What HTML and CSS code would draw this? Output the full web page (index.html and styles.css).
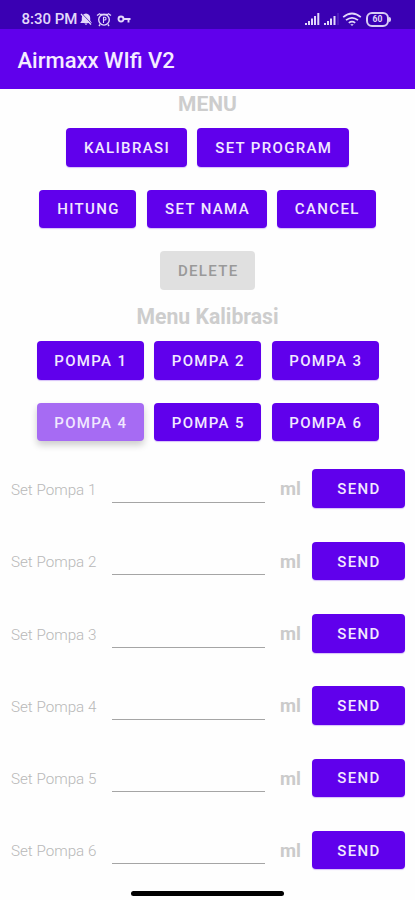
FILE: index.html
```html
<!DOCTYPE html>
<html lang="id">
<head>
<meta charset="utf-8">
<title>Airmaxx WIfi V2</title>
<link rel="stylesheet" href="styles.css">
</head>
<body>
<header>
  <div class="status">
    <span class="time">8:30 PM</span>
    <svg class="mute" width="14" height="14" viewBox="0 0 14 14"><path d="M7 1.500c-2.700.3-4.200 2.200-4.200 4.400v2.600L1.200 11h11.600l-1.600-2.500V5.900C11.200 3.700 9.700 1.800 7 1.500zM5.300 11.500h3.400L7 13z" fill="currentColor"/><path d="M2 2l10 10.500" stroke="currentColor" stroke-width="1.300"/><path d="M4 2.700l8 8.400" stroke="#3a00b3" stroke-width=".7"/></svg>
    <svg class="alarm" width="16" height="15" viewBox="0 0 16 15" fill="none" stroke="currentColor" stroke-width="1.400"><path d="M1 3.500l3-2M15 3.500l-3-2M4 2.500h8M4 12.500L3 14M12 12.500l1 1.500"/><circle cx="8" cy="7.800" r="5.300"/><path d="M7.500 11V5.300h1.200a1.300 1.300 0 0 1 0 2.700H7.500" stroke-width="1.100"/></svg>
    <svg class="key" width="14" height="10" viewBox="0 0 14 10" fill="none" stroke="currentColor" stroke-width="1.900"><circle cx="4" cy="5" r="2.500"/><path d="M6.500 5h7M11.500 5v3.500"/></svg>
    <svg class="signal-a" width="17" height="14" viewBox="0 0 17 14" fill="currentColor"><path d="M1 11h2v2H1zM4 9h2v4H4zM7 6.500h2V13H7zM10 4h2v9h-2zM13.300 1h2v12h-2z"/></svg>
    <svg class="signal-b" width="17" height="14" viewBox="0 0 17 14" fill="currentColor"><path d="M1 11h2v2H1zM4 9h2v4H4zM7 6.500h2V13H7zM10.500 4h2v9h-2z"/><path d="M14.500 1h1v12h-1z" opacity=".25"/></svg>
    <svg class="wifi" width="20" height="15" viewBox="0 0 20 15" fill="none" stroke="currentColor" stroke-width="1.700"><path d="M1.200 5.200Q10-2.200 18.800 5.200M4 8.200q6-4.800 12 0M6.800 10.900q3.200-2.400 6.400 0"/><path d="M8.300 12.300h3.400L10 14z" fill="currentColor" stroke="none"/></svg>
    <span class="battery"><span class="level">60</span></span>
  </div>
  <h1>Airmaxx WIfi V2</h1>
</header>
<main>
  <h2>MENU</h2>
  <div class="buttons"><button class="kalibrasi">KALIBRASI</button><button class="program">SET PROGRAM</button></div>
  <div class="buttons"><button class="hitung">HITUNG</button><button class="nama">SET NAMA</button><button class="cancel">CANCEL</button></div>
  <div class="buttons"><button class="delete" disabled>DELETE</button></div>
  <h2 class="sub">Menu Kalibrasi</h2>
  <div class="buttons pumps"><button>POMPA 1</button><button>POMPA 2</button><button>POMPA 3</button></div>
  <div class="buttons pumps"><button class="pressed">POMPA 4</button><button>POMPA 5</button><button>POMPA 6</button></div>
  <div class="settings">
    <div class="row"><label for="p1">Set Pompa 1</label><input id="p1"><b>ml</b><button>SEND</button></div>
    <div class="row"><label for="p2">Set Pompa 2</label><input id="p2"><b>ml</b><button>SEND</button></div>
    <div class="row"><label for="p3">Set Pompa 3</label><input id="p3"><b>ml</b><button>SEND</button></div>
    <div class="row"><label for="p4">Set Pompa 4</label><input id="p4"><b>ml</b><button>SEND</button></div>
    <div class="row"><label for="p5">Set Pompa 5</label><input id="p5"><b>ml</b><button>SEND</button></div>
    <div class="row"><label for="p6">Set Pompa 6</label><input id="p6"><b>ml</b><button>SEND</button></div>
  </div>
</main>
<div class="home"></div>
</body>
</html>
```
FILE: styles.css
```css
* { box-sizing: border-box; }
body {
  margin: 0;
  height: 900px;
  overflow: hidden;
  background: #fefefe;
  font-family: Roboto, "Liberation Sans", sans-serif;
}
header { height: 89px; background: #6000ec; color: #f4ecff; }
.status {
  height: 29px;
  padding: 9px 26px 0 21.5px;
  background: #3a00b3;
  color: #e2d8fa;
  display: flex;
  align-items: center;
}
.time { width: 57.5px; font-size: 15px; font-weight: 500; line-height: 20px; white-space: nowrap; }
.status svg { flex: none; }
.alarm { margin-left: 3px; }
.key { margin-left: 5px; }
.signal-a { margin-left: auto; }
.signal-b { margin-left: 2.5px; }
.wifi { margin-left: 2px; }
.battery {
  position: relative;
  width: 23px;
  height: 15px;
  margin-left: 4px;
  border: 2px solid #d8cdf5;
  border-radius: 6px;
  display: flex;
  align-items: center;
  justify-content: center;
}
.battery::after {
  content: "";
  position: absolute;
  right: -4px;
  top: 3px;
  width: 2px;
  height: 5px;
  border-radius: 0 2px 2px 0;
  background: #d8cdf5;
}
.level { font-size: 8.5px; font-weight: 700; line-height: 9px; }
h1 {
  margin: 0;
  padding: 19px 0 0 17.5px;
  font-size: 22px;
  font-weight: 500;
  line-height: 26px;
}
h2 {
  margin: 0;
  height: 39px;
  padding-top: 3px;
  text-align: center;
  color: #cdcdcd;
  font-size: 21px;
  font-weight: 700;
  line-height: 24px;
}
.sub { height: 37px; padding-top: 1px; margin-top: -8.5px; font-size: 21.2px; }
.buttons {
  height: 61.6px;
  display: flex;
  justify-content: center;
  align-items: flex-start;
  gap: 10.5px;
}
button {
  flex: none;
  height: 38.5px;
  padding: 1px 0 0 1.5px;
  border: 0;
  border-radius: 4px;
  background: #6000ec;
  color: #f1e8ff;
  font-family: inherit;
  font-size: 15px;
  font-weight: 500;
  letter-spacing: 1.34px;
  white-space: nowrap;
  box-shadow: 0 1px 1px #6000ec40;
}
.kalibrasi { width: 120.5px; }
.program { width: 152px; }
.hitung { width: 97px; }
.nama { width: 120px; }
.cancel { width: 98.5px; }
.delete { width: 95px; background: #e0e0e0; color: #999; box-shadow: none; }
.pumps button { width: 107px; }
.pumps .pressed { background: #a66bf3; box-shadow: 0 4px 7px #0003; }
.settings { margin-top: 5px; }
.row {
  height: 72.3px;
  padding-left: 11px;
  display: grid;
  grid-template-columns: 100.5px 154px 14.5px 31.5px 93.5px;
  align-items: start;
}
label { padding-top: 10.5px; font-size: 15.2px; font-weight: 300; line-height: 20px; color: #b8b8b8; white-space: nowrap; }
input {
  width: 153.5px;
  height: 33.5px;
  padding: 0;
  border: 0;
  border-bottom: 1.5px solid #a5a5a5;
  background: transparent;
  font: 16px Roboto, sans-serif;
  outline: none;
}
.row b { grid-column: 3 / 5; padding: 9px 0 0 14.5px; font-size: 18.5px; line-height: 22px; color: #cbcbcb; }
.row button { grid-column: 5; width: 93.5px; }
.home { position: absolute; left: 131px; top: 890.5px; width: 153px; height: 5px; border-radius: 3px; background: #000; }
```
